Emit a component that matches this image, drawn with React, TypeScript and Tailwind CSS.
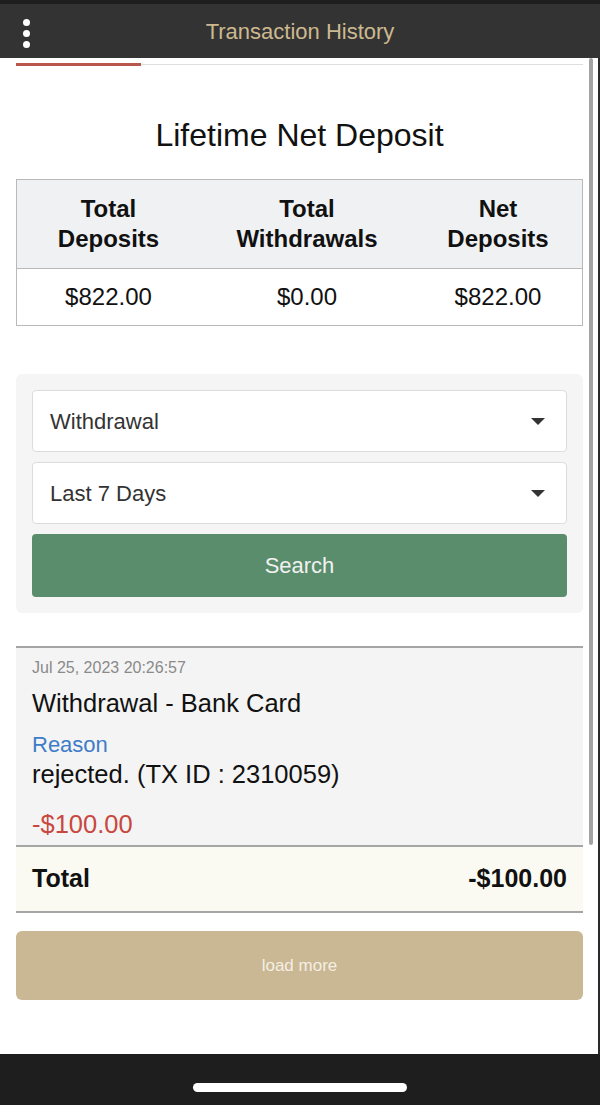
import React from "react";

function Caret() {
  return (
    <svg width="16" height="9" viewBox="0 0 16 9" className="shrink-0">
      <path d="M1 1 L15 1 L8 8 Z" fill="#333" />
    </svg>
  );
}

function SelectBox({ label }: { label: string }) {
  return (
    <div className="flex h-[62px] items-center justify-between rounded-[4px] border border-[#dcdcdc] bg-white pl-[17px] pr-[20px]">
      <span className="text-[22px] text-[#333]">{label}</span>
      <Caret />
    </div>
  );
}

export default function App() {
  return (
    <div
      className="flex min-h-[1105px] w-[600px] flex-col bg-white"
      style={{ fontFamily: '"Liberation Sans", Arial, sans-serif' }}
    >
      {/* top bar */}
      <div className="h-[4px] bg-[#1e1e1e]" />
      <header className="relative flex h-[54px] items-center justify-center bg-[#333333]">
        <div className="absolute left-[23px] top-[15px] flex flex-col gap-[4px]">
          <span className="h-[7px] w-[7px] rounded-full bg-white" />
          <span className="h-[7px] w-[7px] rounded-full bg-white" />
          <span className="h-[7px] w-[7px] rounded-full bg-white" />
        </div>
        <h1 className="text-[22px] text-[#cdb990]">Transaction History</h1>
      </header>

      {/* main content */}
      <main className="relative flex flex-1 flex-col border-r-2 border-[#2a2a2a] pb-[54px] pl-[16px] pr-[15px]">
        {/* scrollbar */}
        <div className="absolute right-[5px] top-0 h-[787px] w-[4px] rounded-full bg-[#a3a3a3]" />

        {/* tab line */}
        <div className="relative mt-[5px] h-[3px]">
          <div className="absolute left-0 right-0 top-[1px] h-[1px] bg-[#dedede]" />
          <div className="absolute left-0 top-0 h-[3px] w-[125px] bg-[#b9574d]" />
        </div>

        <h2 className="mt-[49px] text-center text-[32px] leading-[40px] text-[#111]">
          Lifetime Net Deposit
        </h2>

        {/* summary table */}
        <div className="mt-[24px] border border-[#b9b9b9]">
          <div className="grid grid-cols-[183px_214px_1fr] bg-[#f0f1f3] py-[14px] text-center text-[24px] font-bold leading-[30px] text-[#111]">
            <div>
              Total
              <br />
              Deposits
            </div>
            <div>
              Total
              <br />
              Withdrawals
            </div>
            <div>
              Net
              <br />
              Deposits
            </div>
          </div>
          <div className="grid h-[57px] grid-cols-[183px_214px_1fr] items-center border-t border-[#b9b9b9] text-center text-[24px] text-[#111]">
            <div>$822.00</div>
            <div>$0.00</div>
            <div>$822.00</div>
          </div>
        </div>

        {/* filters */}
        <div className="mt-[48px] flex flex-col gap-[10px] rounded-[6px] bg-[#f5f5f5] p-[16px]">
          <SelectBox label="Withdrawal" />
          <SelectBox label="Last 7 Days" />
          <button className="h-[63px] rounded-[4px] bg-[#5a8d6c] text-[22px] text-[#f1f1f1]">
            Search
          </button>
        </div>

        {/* transaction list */}
        <div className="mt-[33px] border-t-2 border-[#a5a5a5] bg-[#f4f4f4] px-[16px] pb-[6px] pt-[9px]">
          <div className="text-[16px] leading-[22px] text-[#8a8a8a]">Jul 25, 2023 20:26:57</div>
          <div className="mt-[9px] text-[25.5px] leading-[30px] text-[#111]">Withdrawal - Bank Card</div>
          <div className="mt-[13px] text-[22px] leading-[28px] text-[#3f7cc8]">Reason</div>
          <div className="text-[25.5px] leading-[30px] text-[#111]">rejected. (TX ID : 2310059)</div>
          <div className="mt-[20px] text-[25.5px] leading-[30px] text-[#c8473e]">-$100.00</div>
        </div>
        <div className="flex h-[68px] items-center justify-between border-y-2 border-[#a5a5a5] bg-[#fbfaf2] px-[16px] text-[25px] font-bold text-[#111]">
          <span>Total</span>
          <span>-$100.00</span>
        </div>

        <button className="mt-[18px] h-[69px] rounded-[6px] bg-[#cab793] text-[17px] text-[#f4efe4]">
          load more
        </button>
      </main>

      {/* bottom bar */}
      <div className="flex h-[51px] justify-center bg-[#1e1e1e] pt-[29px]">
        <div className="h-[9px] w-[214px] rounded-full bg-white" />
      </div>
    </div>
  );
}
